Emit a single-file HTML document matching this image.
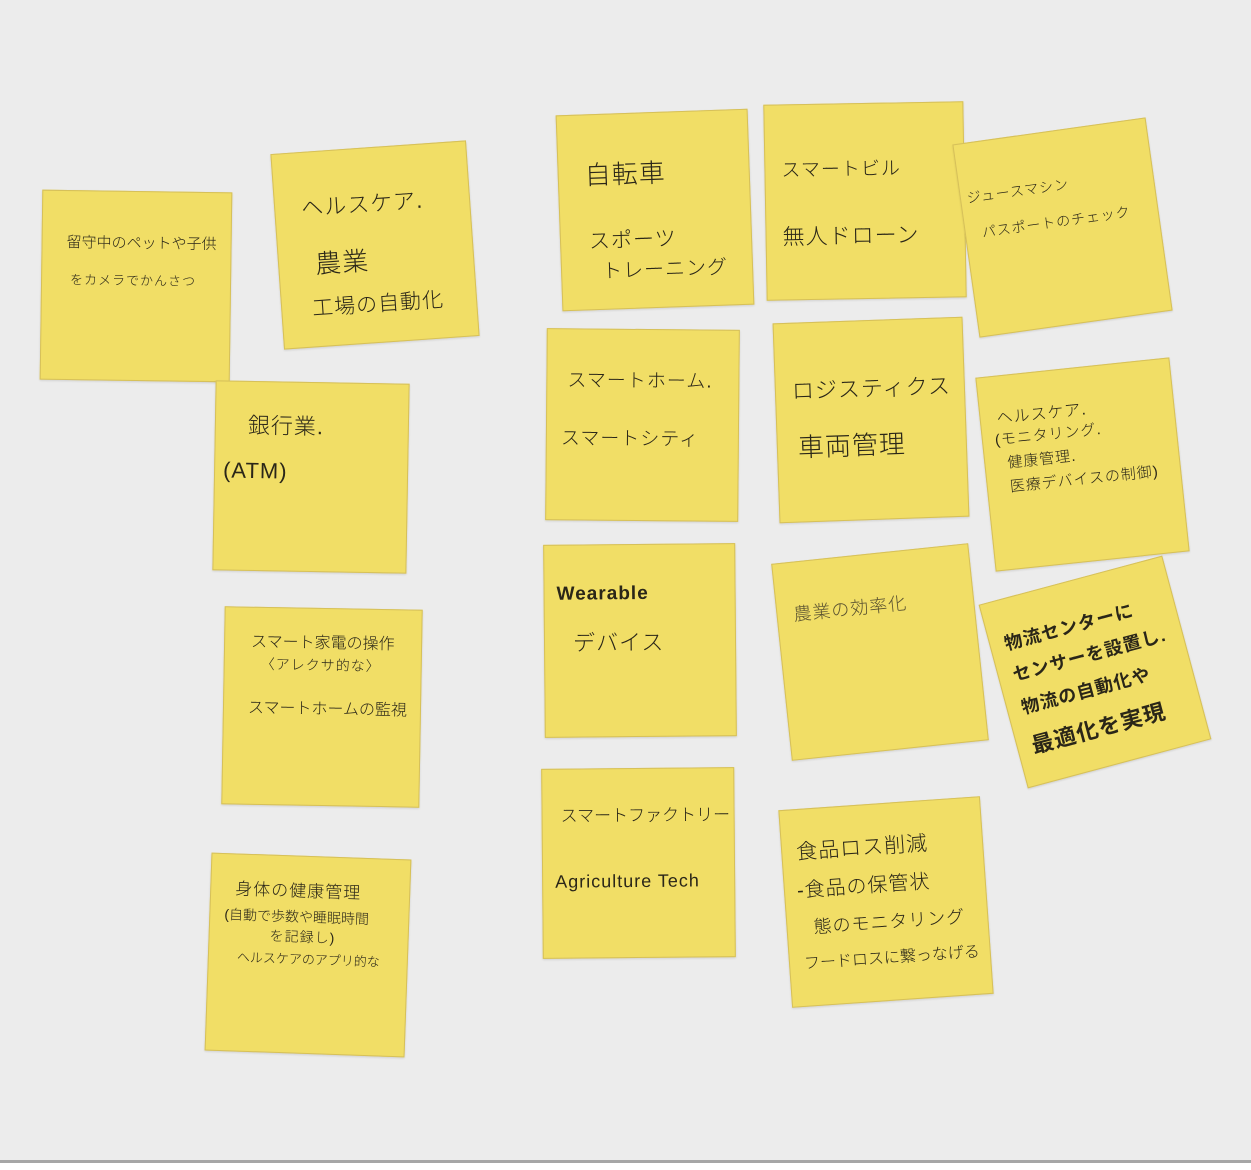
<!DOCTYPE html>
<html><head><meta charset="utf-8"><style>
html,body{margin:0;padding:0}
body{width:1251px;height:1170px;background:#ececec;position:relative;overflow:hidden;font-family:"Liberation Sans","Noto Sans CJK JP",sans-serif;color:#2a2618}
.n{position:absolute;background:#f1de66;border:1.5px solid #d6c05a;box-sizing:border-box;box-shadow:0 1px 2px rgba(0,0,0,.12)}
.n p{position:absolute;margin:0;white-space:nowrap;font-weight:300;letter-spacing:1px}
.line{position:absolute;left:0;top:1160px;width:1251px;height:3px;background:#a6a6a6}
.bot{position:absolute;left:0;top:1163px;width:1251px;height:7px;background:#fff}
</style></head><body>

<div class="n" style="left:41px;top:191px;width:190px;height:190px;transform:rotate(0.8deg)">
<p style="left:24px;top:40px;font-size:15px;letter-spacing:0">留守中のペットや子供</p>
<p style="left:28px;top:78px;font-size:13px">をカメラでかんさつ</p></div>

<div class="n" style="left:277px;top:147px;width:196px;height:196px;transform:rotate(-4deg)">
<p style="left:26px;top:38px;font-size:22px">ヘルスケア.</p>
<p style="left:36px;top:92px;font-size:26px">農業</p>
<p style="left:30px;top:140px;font-size:21px">工場の自動化</p></div>

<div class="n" style="left:559px;top:112px;width:192px;height:196px;transform:rotate(-2deg)">
<p style="left:26px;top:40px;font-size:26px">自転車</p>
<p style="left:28px;top:110px;font-size:21px">スポーツ</p>
<p style="left:40px;top:140px;font-size:20px">トレーニング</p></div>

<div class="n" style="left:765px;top:103px;width:200px;height:196px;transform:rotate(-1deg)">
<p style="left:16px;top:50px;font-size:19px">スマートビル</p>
<p style="left:16px;top:114px;font-size:22px">無人ドローン</p></div>

<div class="n" style="left:965px;top:130px;width:195px;height:195px;transform:rotate(-8deg)">
<p style="left:6px;top:44px;font-size:14px">ジュースマシン</p>
<p style="left:16px;top:80px;font-size:14px">パスポートのチェック</p></div>

<div class="n" style="left:214px;top:382px;width:194px;height:190px;transform:rotate(1deg)">
<p style="left:32px;top:26px;font-size:22px">銀行業.</p>
<p style="left:8px;top:76px;font-size:22px">(ATM)</p></div>

<div class="n" style="left:546px;top:329px;width:193px;height:192px;transform:rotate(0.5deg)">
<p style="left:20px;top:36px;font-size:19px">スマートホーム.</p>
<p style="left:14px;top:94px;font-size:19px">スマートシティ</p></div>

<div class="n" style="left:776px;top:320px;width:190px;height:200px;transform:rotate(-2deg)">
<p style="left:16px;top:50px;font-size:22px">ロジスティクス</p>
<p style="left:20px;top:104px;font-size:26px">車両管理</p></div>

<div class="n" style="left:985px;top:367px;width:195px;height:195px;transform:rotate(-6deg)">
<p style="left:16px;top:28px;font-size:16px">ヘルスケア.</p>
<p style="left:12px;top:52px;font-size:15px">(モニタリング.</p>
<p style="left:22px;top:76px;font-size:15px">健康管理.</p>
<p style="left:22px;top:100px;font-size:15px">医療デバイスの制御)</p></div>

<div class="n" style="left:544px;top:544px;width:192px;height:193px;transform:rotate(-0.5deg)">
<p style="left:12px;top:38px;font-size:19px;font-weight:700">Wearable</p>
<p style="left:28px;top:80px;font-size:22px">デバイス</p></div>

<div class="n" style="left:781px;top:553px;width:198px;height:198px;transform:rotate(-6deg)">
<p style="left:16px;top:38px;font-size:18px;color:#5a5230">農業の効率化</p></div>

<div class="n" style="left:1000px;top:577px;width:190px;height:190px;transform:rotate(-15deg)">
<p style="left:14px;top:30px;font-size:18px;font-weight:700">物流センターに</p>
<p style="left:14px;top:62px;font-size:18px;font-weight:700">センサーを設置し.</p>
<p style="left:14px;top:96px;font-size:18px;font-weight:700">物流の自動化や</p>
<p style="left:14px;top:132px;font-size:22px;font-weight:700">最適化を実現</p></div>

<div class="n" style="left:223px;top:608px;width:198px;height:198px;transform:rotate(1deg)">
<p style="left:26px;top:20px;font-size:16px;letter-spacing:0">スマート家電の操作</p>
<p style="left:36px;top:46px;font-size:14px">〈アレクサ的な〉</p>
<p style="left:24px;top:86px;font-size:16px;letter-spacing:0">スマートホームの監視</p></div>

<div class="n" style="left:542px;top:768px;width:193px;height:190px;transform:rotate(-0.5deg)">
<p style="left:18px;top:32px;font-size:17px;letter-spacing:0">スマートファクトリー</p>
<p style="left:12px;top:102px;font-size:18px">Agriculture Tech</p></div>

<div class="n" style="left:785px;top:803px;width:202px;height:198px;transform:rotate(-4deg)">
<p style="left:14px;top:26px;font-size:21px">食品ロス削減</p>
<p style="left:12px;top:64px;font-size:20px">-食品の保管状</p>
<p style="left:26px;top:104px;font-size:18px">態のモニタリング</p>
<p style="left:14px;top:140px;font-size:16px;letter-spacing:0">フードロスに繋っなげる</p></div>

<div class="n" style="left:208px;top:856px;width:200px;height:198px;transform:rotate(2deg)">
<p style="left:24px;top:20px;font-size:17px">身体の健康管理</p>
<p style="left:14px;top:50px;font-size:14px;letter-spacing:0">(自動で歩数や睡眠時間</p>
<p style="left:60px;top:70px;font-size:14px">を記録し)</p>
<p style="left:28px;top:92px;font-size:13px;letter-spacing:0">ヘルスケアのアプリ的な</p></div>

<div class="line"></div><div class="bot"></div>
</body></html>
